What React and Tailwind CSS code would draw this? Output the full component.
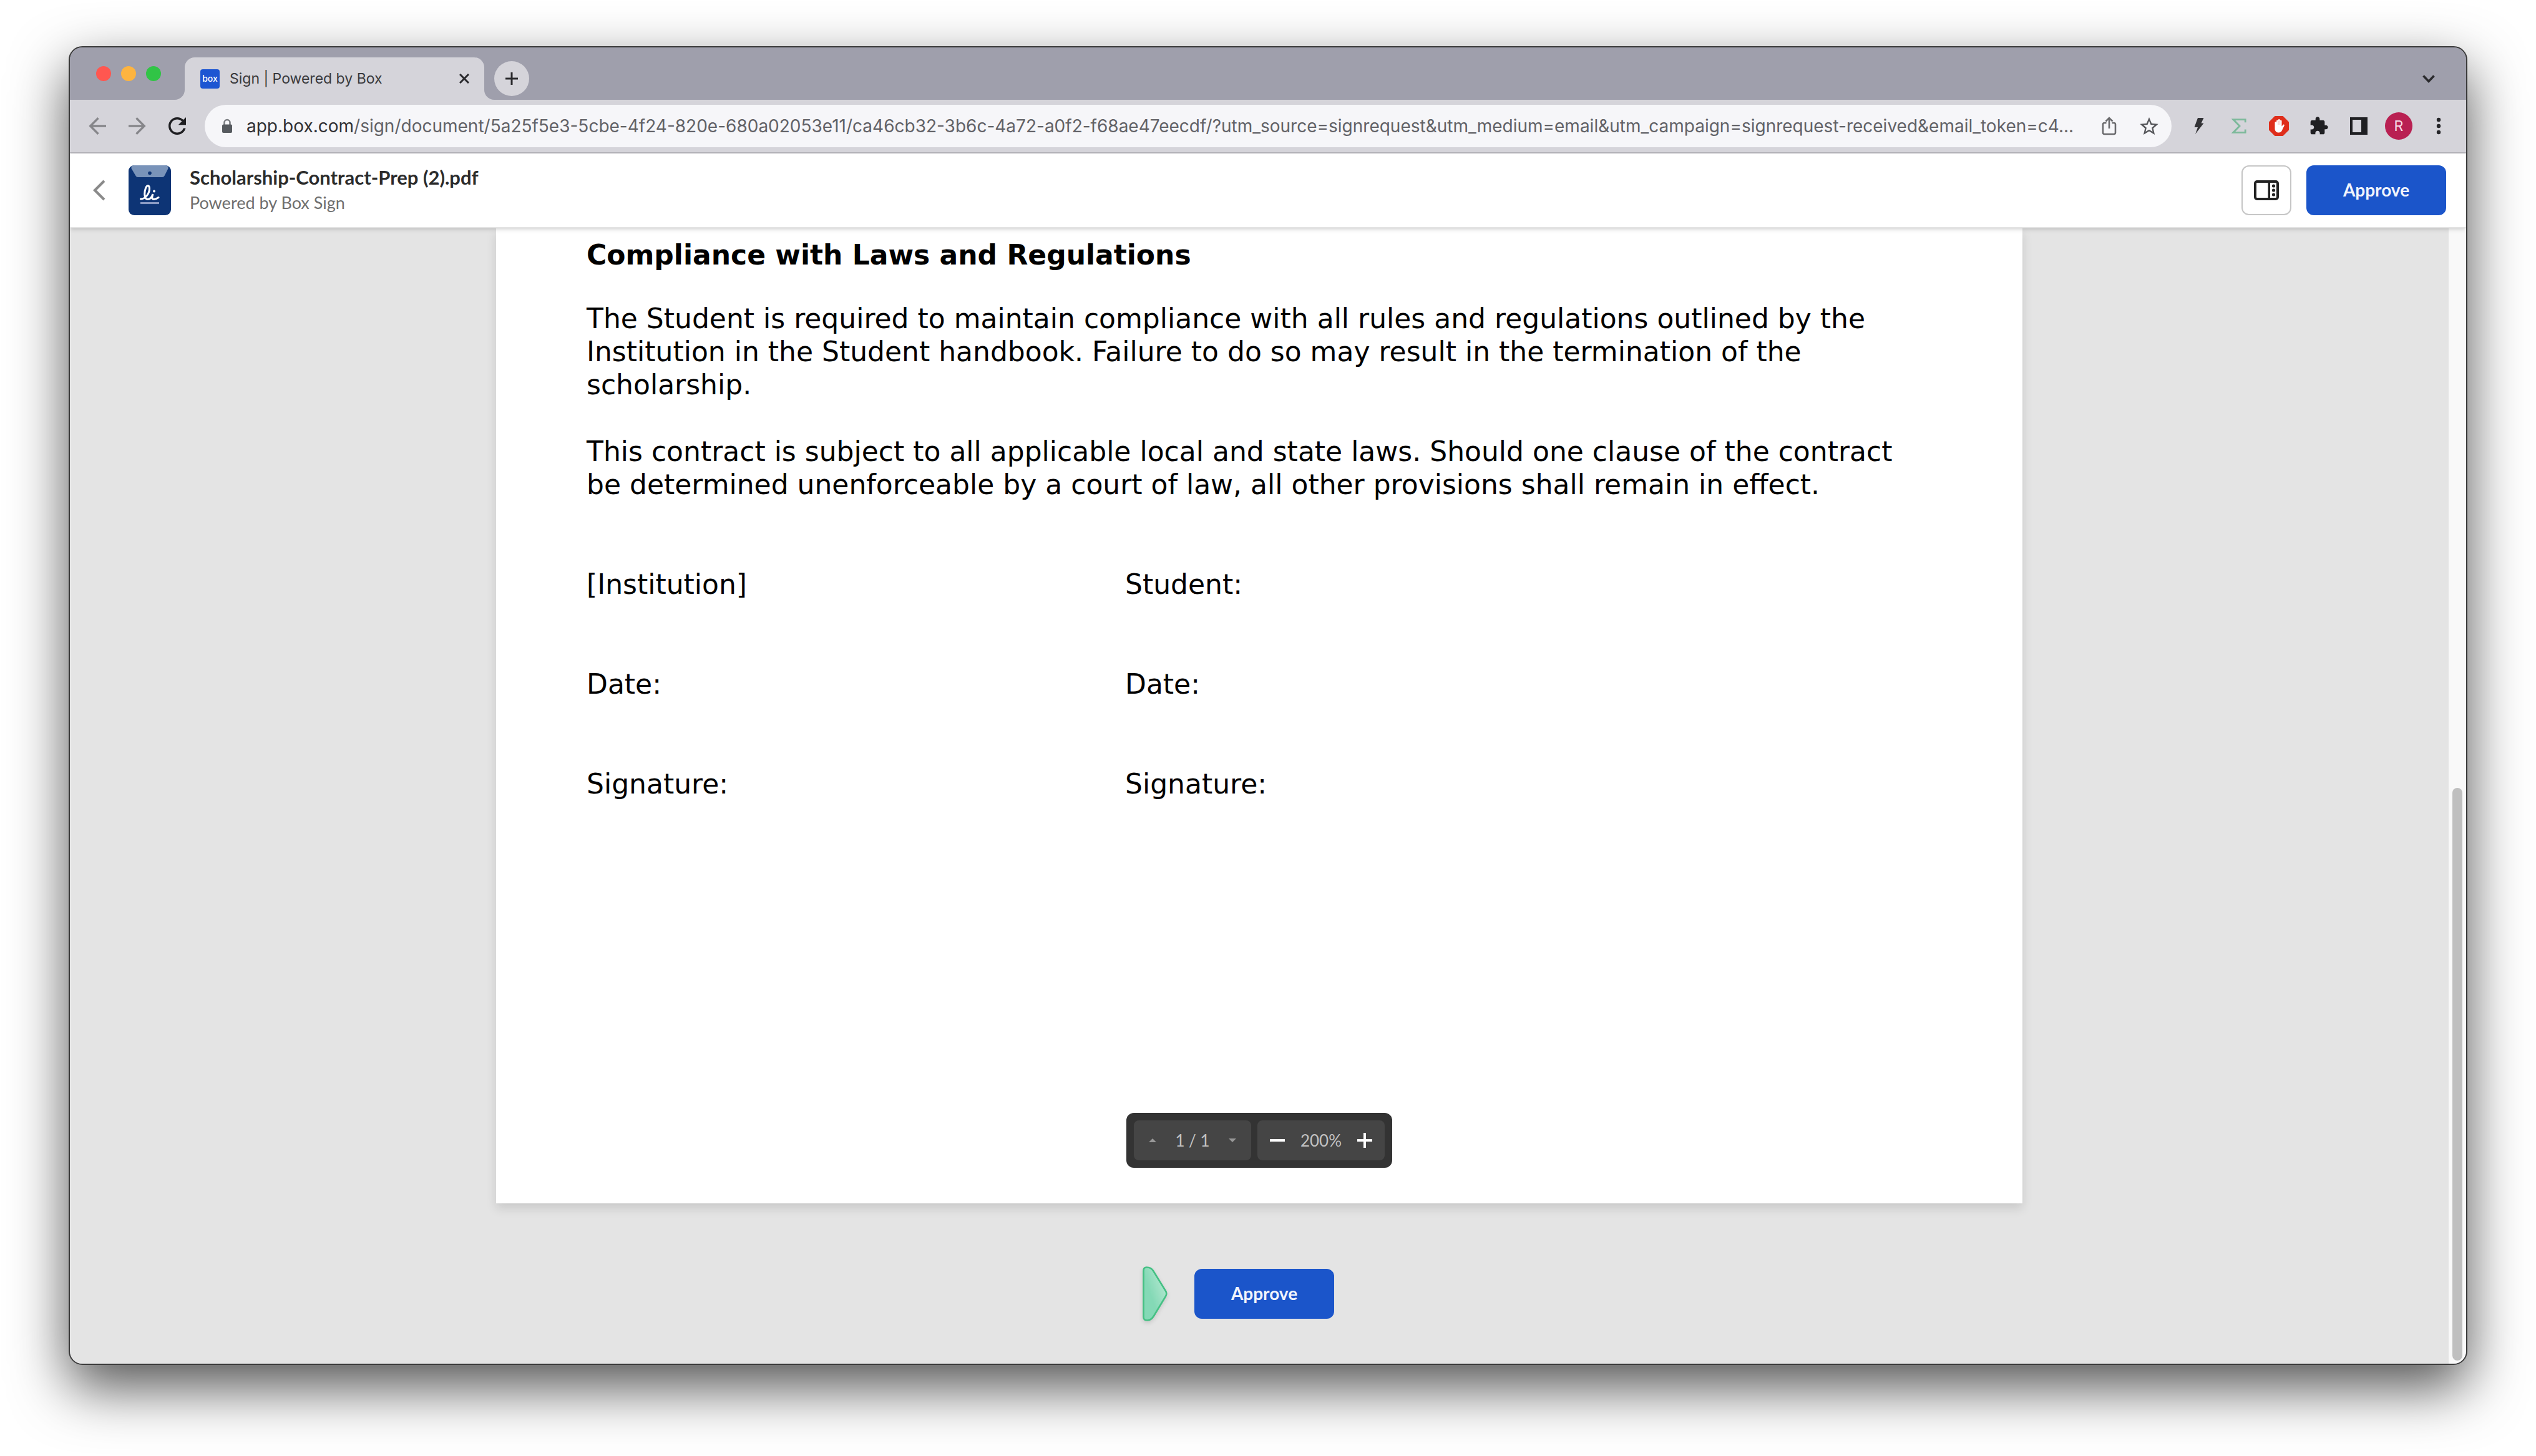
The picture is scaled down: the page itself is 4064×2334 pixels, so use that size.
const ICON_SLOT = "flex w-16 shrink-0 items-center justify-center";

function ArrowIcon({ flip }) {
  return (
    <svg viewBox="0 0 28 28" className={flip ? "size-7 rotate-180" : "size-7"} fill="none" stroke="#86868a" strokeWidth="3.4">
      <path d="M28 14H3M15.500 1.300 2.800 14l12.700 12.700" />
    </svg>
  );
}

function ReloadIcon() {
  return (
    <svg viewBox="4 4 16 16" className="size-7" fill="#1f1f22">
      <path d="M17.650 6.350C16.200 4.900 14.210 4 12 4c-4.420 0-7.990 3.580-7.990 8s3.570 8 7.990 8c3.730 0 6.840-2.550 7.730-6h-2.080c-.82 2.330-3.040 4-5.650 4-3.310 0-6-2.690-6-6s2.690-6 6-6c1.660 0 3.140.69 4.220 1.780L13 11h7V4l-2.350 2.350z" />
    </svg>
  );
}

function LockIcon() {
  return (
    <svg viewBox="0 0 18 24" className="h-6 w-[18px] shrink-0" fill="none">
      <path d="M4.500 11V6.500a4.500 4.500 0 0 1 9 0V11" stroke="#7b7e82" strokeWidth="2.600" />
      <rect x="1" y="9.500" width="16" height="13.500" rx="2" fill="#565a5f" />
    </svg>
  );
}

function ShareIcon() {
  return (
    <svg viewBox="0 0 24 30" className="h-[30px] w-6" fill="none" stroke="#6a6a6d" strokeWidth="2.600">
      <path d="M7.500 10H4.500a2.500 2.500 0 0 0-2.500 2.500v13A2.500 2.500 0 0 0 4.500 28h15a2.500 2.500 0 0 0 2.500-2.500v-13a2.500 2.500 0 0 0-2.500-2.500h-3" />
      <path d="M12 19V4M6.500 7.500 12 2l5.500 5.500" />
    </svg>
  );
}

function StarIcon() {
  return (
    <svg viewBox="2 2 20 19" className="h-7 w-[30px]" fill="#55565a">
      <path d="M22 9.240l-7.190-.62L12 2 9.190 8.630 2 9.240l5.460 4.730L5.820 21 12 17.270 18.180 21l-1.630-7.030L22 9.240zM12 15.400l-3.760 2.270 1-4.280-3.320-2.880 4.380-.38L12 6.100l1.710 4.040 4.380.38-3.320 2.880 1 4.280L12 15.400z" />
    </svg>
  );
}

function BoltIcon() {
  return (
    <svg viewBox="0 0 16 26" className="h-[26px] w-4" fill="#333336">
      <path d="M6 0h9.500L11.500 8.500h4L2 26l4-11H.5z" />
    </svg>
  );
}

function SigmaIcon() {
  return (
    <svg viewBox="0 0 24 24" className="size-6" fill="none" stroke="#7db99b" strokeWidth="2.800">
      <path d="M22.200 6.200V1.600H2.800L13 12 2.800 22.400h19.400v-5" />
    </svg>
  );
}

function StopHandIcon() {
  return (
    <svg viewBox="0 0 32 32" className="size-8">
      <path d="M9.500 0h13L32 9.500v13L22.500 32h-13L0 22.500v-13z" fill="#df2e1b" />
      <path d="M9.500 10.500a1.300 1.300 0 0 1 2.600 0V8a1.400 1.400 0 0 1 2.800 0V6.500a1.400 1.400 0 0 1 2.800 0V8a1.400 1.400 0 0 1 2.800 0v8.500l2.300-2.600c1-.9 2.400 0 1.900 1.300l-3.500 7.300c-1 2.600-2.800 4-5.600 4-3.800 0-6.100-2.500-6.100-6.500z" fill="#fff" />
      <path d="M14.900 8v6M17.700 8v6" stroke="#f1a49b" strokeWidth=".9" />
    </svg>
  );
}

function PuzzleIcon() {
  return (
    <svg viewBox="0 0 24 24" className="size-8" fill="#1f1f22">
      <path d="M20.500 11H19V7c0-1.100-.9-2-2-2h-4V3.500C13 2.120 11.880 1 10.500 1S8 2.120 8 3.500V5H4c-1.100 0-1.990.9-1.990 2v3.800H3.500c1.490 0 2.700 1.210 2.700 2.700s-1.210 2.700-2.700 2.700H2V20c0 1.100.9 2 2 2h3.800v-1.500c0-1.490 1.210-2.700 2.700-2.700s2.700 1.210 2.700 2.700V22H17c1.100 0 2-.9 2-2v-4h1.500c1.380 0 2.500-1.120 2.500-2.500S21.880 11 20.500 11z" />
    </svg>
  );
}

function SidePanelIcon() {
  return (
    <svg viewBox="0 0 28 28" className="size-7">
      <path d="M0 0h28v28H0z" fill="#1f1f22" />
      <path d="M4 4h14v20H4z" fill="#d5d4da" />
    </svg>
  );
}

function DotsIcon() {
  return (
    <svg viewBox="0 0 8 28" className="h-7 w-2" fill="#252528">
      <circle cx="4" cy="4" r="3.200" />
      <circle cx="4" cy="14" r="3.200" />
      <circle cx="4" cy="24" r="3.200" />
    </svg>
  );
}

function SignLogo() {
  return (
    <svg viewBox="0 0 68 80" className="h-20 w-[68px] shrink-0" fill="none">
      <rect width="68" height="80" rx="9" fill="#0d3475" />
      <path d="M9 0h50c3 0 5 2 4.500 5L58 16c-1 2-2 3-4 3H15c-2 0-3-1-4-3L4.500 5C4 2 6 0 9 0z" fill="#7993b9" />
      <circle cx="34" cy="12.500" r="2.800" fill="#0d3475" />
      <path d="M19.500 54C26 54.500 33.500 46 33.500 37.500c0-6-4-6.500-6-1-3 8-2 18 3 18 4 0 7-4 8.500-8.500-1.500 5-2 8.500 1.500 8.500 3 0 5.500-1.500 7.500-3" stroke="#fff" strokeWidth="3" strokeLinecap="round" />
      <circle cx="41" cy="41.500" r="1.900" fill="#fff" />
      <path d="M19 60.500h30" stroke="#8b9bc4" strokeWidth="3.200" />
    </svg>
  );
}

function PanelToggleIcon() {
  return (
    <svg viewBox="0 0 40 32" className="h-8 w-10" fill="#222">
      <rect x="2" y="2" width="36" height="28" rx="3" fill="none" stroke="#222" strokeWidth="4" />
      <path d="M22.500 2h3.500v28h-3.500z" />
      <circle cx="31.500" cy="9" r="2.600" />
      <circle cx="31.500" cy="16" r="2.600" />
      <circle cx="31.500" cy="23" r="2.600" />
    </svg>
  );
}

function PointerMarker() {
  return (
    <svg viewBox="0 0 40 88" className="h-[88px] w-10 drop-shadow-md">
      <defs>
        <linearGradient id="marker" x1="0.800" y1="0.100" x2="0.300" y2="0.500">
          <stop offset="0.200" stopColor="#a9e4ca" />
          <stop offset="1" stopColor="#84d9b6" />
        </linearGradient>
      </defs>
      <path d="M1.500 7c0-4 2-5.500 5-5.500 5 0 8 1.500 10.500 5.500l20 32.500c1.800 3 1.800 5.500 0 8.500L18 79.500C15 84.500 12 86.500 7.500 86.500c-4 0-6-1.500-6-5.500z" fill="url(#marker)" stroke="#45c084" strokeWidth="2.600" />
    </svg>
  );
}

function TabBar() {
  return (
    <div className="flex h-[84px] shrink-0 items-end bg-[#9f9fac] pl-[42px]">
      <div className="mb-[30px] flex gap-4">
        <button type="button" aria-label="Close window" className="size-6 rounded-full bg-[#ff5750]" />
        <button type="button" aria-label="Minimize window" className="size-6 rounded-full bg-[#fdb440]" />
        <button type="button" aria-label="Zoom window" className="size-6 rounded-full bg-[#31c446]" />
      </div>
      <div className="ml-[22px] size-4 bg-[#d5d4da]">
        <div className="size-full rounded-br-2xl bg-[#9f9fac]" />
      </div>
      <div className="flex h-[68px] w-[480px] items-center rounded-t-2xl bg-[#d5d4da] pr-6 pl-[25px]">
        <span className="flex size-[31px] items-center justify-center rounded bg-[#1c55d2] pb-0.5 text-[14px] font-medium text-white">box</span>
        <span className="ml-4 text-[23px] text-[#39393c]">Sign | Powered by Box</span>
        <button type="button" aria-label="Close tab" className="ml-auto">
          <svg viewBox="0 0 16 16" className="size-4" stroke="#2a2a2d" strokeWidth="3">
            <path d="M1 1l14 14M15 1 1 15" />
          </svg>
        </button>
      </div>
      <div className="size-4 bg-[#d5d4da]">
        <div className="size-full rounded-bl-2xl bg-[#9f9fac]" />
      </div>
      <button type="button" aria-label="New tab" className="mb-1.5 flex size-14 items-center justify-center rounded-full bg-[#d5d4da]">
        <svg viewBox="0 0 20 20" className="size-5" stroke="#2a2a2d" strokeWidth="3">
          <path d="M10 0v20M0 10h20" />
        </svg>
      </button>
      <button type="button" aria-label="Search tabs" className="mr-[50px] mb-[26px] ml-auto">
        <svg viewBox="0 0 20 14" className="h-3.5 w-5" fill="none" stroke="#2a2a2d" strokeWidth="3.600">
          <path d="M1.500 1.500 10 10.500l8.500-9" />
        </svg>
      </button>
    </div>
  );
}

function Toolbar() {
  return (
    <div className="flex h-[86px] shrink-0 items-center border-b-2 border-[#b1b0b6] bg-[#d5d4da] pr-3 pl-[30px]">
      <div className="flex gap-9">
        <button type="button" aria-label="Back"><ArrowIcon /></button>
        <button type="button" aria-label="Forward"><ArrowIcon flip /></button>
        <button type="button" aria-label="Reload"><ReloadIcon /></button>
      </div>
      <div className="ml-[30px] flex h-[68px] min-w-0 flex-1 items-center rounded-full bg-[#f6f6f9] pr-1 pl-[27px]">
        <LockIcon />
        <label htmlFor="address" className="ml-[22px] text-[28px] text-[#303034]">app.box.com</label>
        <input
          id="address"
          type="text"
          className="min-w-0 flex-1 bg-transparent text-[28px] text-[#626267] outline-none"
          defaultValue="/sign/document/5a25f5e3-5cbe-4f24-820e-680a02053e11/ca46cb32-3b6c-4a72-a0f2-f68ae47eecdf/?utm_source=signrequest&utm_medium=email&utm_campaign=signrequest-received&email_token=c4..."
        />
        <button type="button" aria-label="Share" className={ICON_SLOT}><ShareIcon /></button>
        <button type="button" aria-label="Bookmark" className={ICON_SLOT}><StarIcon /></button>
      </div>
      <div className="ml-3 flex items-center">
        <button type="button" aria-label="Quick actions" className={ICON_SLOT}><BoltIcon /></button>
        <button type="button" aria-label="Sigma" className={ICON_SLOT}><SigmaIcon /></button>
        <button type="button" aria-label="Ad blocker" className={ICON_SLOT}><StopHandIcon /></button>
        <button type="button" aria-label="Extensions" className={ICON_SLOT}><PuzzleIcon /></button>
        <button type="button" aria-label="Side panel" className={ICON_SLOT}><SidePanelIcon /></button>
        <button type="button" aria-label="Profile" className={ICON_SLOT}>
          <span className="flex size-11 items-center justify-center rounded-full bg-[#b92052] text-[23px] text-[#f6dbe6]">R</span>
        </button>
        <button type="button" aria-label="Menu" className={ICON_SLOT}><DotsIcon /></button>
      </div>
    </div>
  );
}

function ApproveButton() {
  return (
    <button type="button" className="h-20 w-56 rounded-xl bg-[#1b55ca] pb-0.5 font-[Lato,sans-serif] text-[28px] font-bold text-[#f1f4fc]">
      Approve
    </button>
  );
}

function Header() {
  return (
    <header className="relative z-10 flex h-[120px] shrink-0 items-center border-b-2 border-[#e3e3e3] bg-white pr-8 pl-[37px] font-[Lato,sans-serif] shadow-md">
      <button type="button" aria-label="Go back">
        <svg viewBox="0 0 20 34" className="h-[34px] w-5" fill="none" stroke="#8a8a8a" strokeWidth="4.200">
          <path d="M18 2 3 17l15 15" />
        </svg>
      </button>
      <div className="ml-[37px] flex items-center gap-[30px]">
        <SignLogo />
        <div>
          <h1 className="text-[31px] leading-[40px] font-bold text-[#2b2b2b]">Scholarship-Contract-Prep (2).pdf</h1>
          <p className="text-[27px] leading-[42px] text-[#6f6f6f]">Powered by Box Sign</p>
        </div>
      </div>
      <div className="ml-auto flex gap-6">
        <button type="button" aria-label="Toggle side panel" className="flex size-20 items-center justify-center rounded-xl border-2 border-[#c6c6c6] bg-white">
          <PanelToggleIcon />
        </button>
        <ApproveButton />
      </div>
    </header>
  );
}

function ViewerControls() {
  return (
    <div className="mx-auto mt-auto mb-[57px] flex h-[88px] w-[426px] gap-2.5 rounded-xl bg-[#333] p-3 font-[Lato,sans-serif] text-[26px] text-[#c2c2c2]">
      <div className="flex w-[188px] items-center justify-between rounded-lg bg-[#454545] px-6">
        <button type="button" aria-label="Previous page">
          <svg viewBox="0 0 12 6" className="h-1.5 w-3" fill="#989898"><path d="M0 6 6 0l6 6z" /></svg>
        </button>
        <span>1 / 1</span>
        <button type="button" aria-label="Next page">
          <svg viewBox="0 0 12 6" className="h-1.5 w-3" fill="#989898"><path d="M0 0l6 6 6-6z" /></svg>
        </button>
      </div>
      <div className="flex flex-1 items-center justify-between rounded-lg bg-[#454545] px-5">
        <button type="button" aria-label="Zoom out">
          <svg viewBox="0 0 24 24" className="size-6" fill="#fff"><path d="M0 10h24v4H0z" /></svg>
        </button>
        <span>200%</span>
        <button type="button" aria-label="Zoom in">
          <svg viewBox="0 0 24 24" className="size-6" fill="#fff"><path d="M0 10h10V0h4v10h10v4H14v10h-4V14H0z" /></svg>
        </button>
      </div>
    </div>
  );
}

const SIGNATURE_ROWS = [
  ["[Institution]", "Student:"],
  ["Date:", "Date:"],
  ["Signature:", "Signature:"],
];

function DocumentPage() {
  return (
    <article className="mx-auto flex w-full max-w-[2446px] flex-1 flex-col bg-white pt-4 shadow-[0_8px_16px_rgba(0,0,0,0.12)]">
      <div className="px-[145px] font-['DejaVu_Sans',sans-serif] text-[44px] leading-[53px] text-black">
        <h2 className="font-bold">Compliance with Laws and Regulations</h2>
        <p className="mt-[49px]">
          The Student is required to maintain compliance with all rules and regulations outlined by the
          <br />
          Institution in the Student handbook. Failure to do so may result in the termination of the
          <br />
          scholarship.
        </p>
        <p className="mt-[54px]">
          This contract is subject to all applicable local and state laws. Should one clause of the contract
          <br />
          be determined unenforceable by a court of law, all other provisions shall remain in effect.
        </p>
        <div className="mt-[107px] grid grid-cols-[863px_1fr] gap-y-[107px]">
          {SIGNATURE_ROWS.flatMap(([left, right], i) => [
            <span key={`left-${i}`}>{left}</span>,
            <span key={`right-${i}`}>{right}</span>,
          ])}
        </div>
      </div>
      <ViewerControls />
    </article>
  );
}

export default function App() {
  return (
    <div className="flex min-h-screen flex-col bg-white px-[110px] pt-[74px] pb-[146px] font-[Inter,sans-serif]">
      <div className="flex flex-1 flex-col overflow-hidden rounded-[22px] border-2 border-[#3a3a3a] bg-[#9f9fac] shadow-[0_36px_90px_rgba(0,0,0,0.68)]">
        <TabBar />
        <Toolbar />
        <Header />
        <div className="flex flex-1">
          <main className="flex min-w-0 flex-1 flex-col bg-[#e4e4e4]">
            <DocumentPage />
            <div className="flex items-center justify-center gap-[43px] pt-[101px] pr-[67px] pb-[68px]">
              <PointerMarker />
              <ApproveButton />
            </div>
          </main>
          <div className="flex w-7 flex-col justify-end bg-[#f9f9f9] px-1.5 pb-[5px]">
            <div className="h-[918px] rounded-full bg-[#bfbfbf]" />
          </div>
        </div>
      </div>
    </div>
  );
}
